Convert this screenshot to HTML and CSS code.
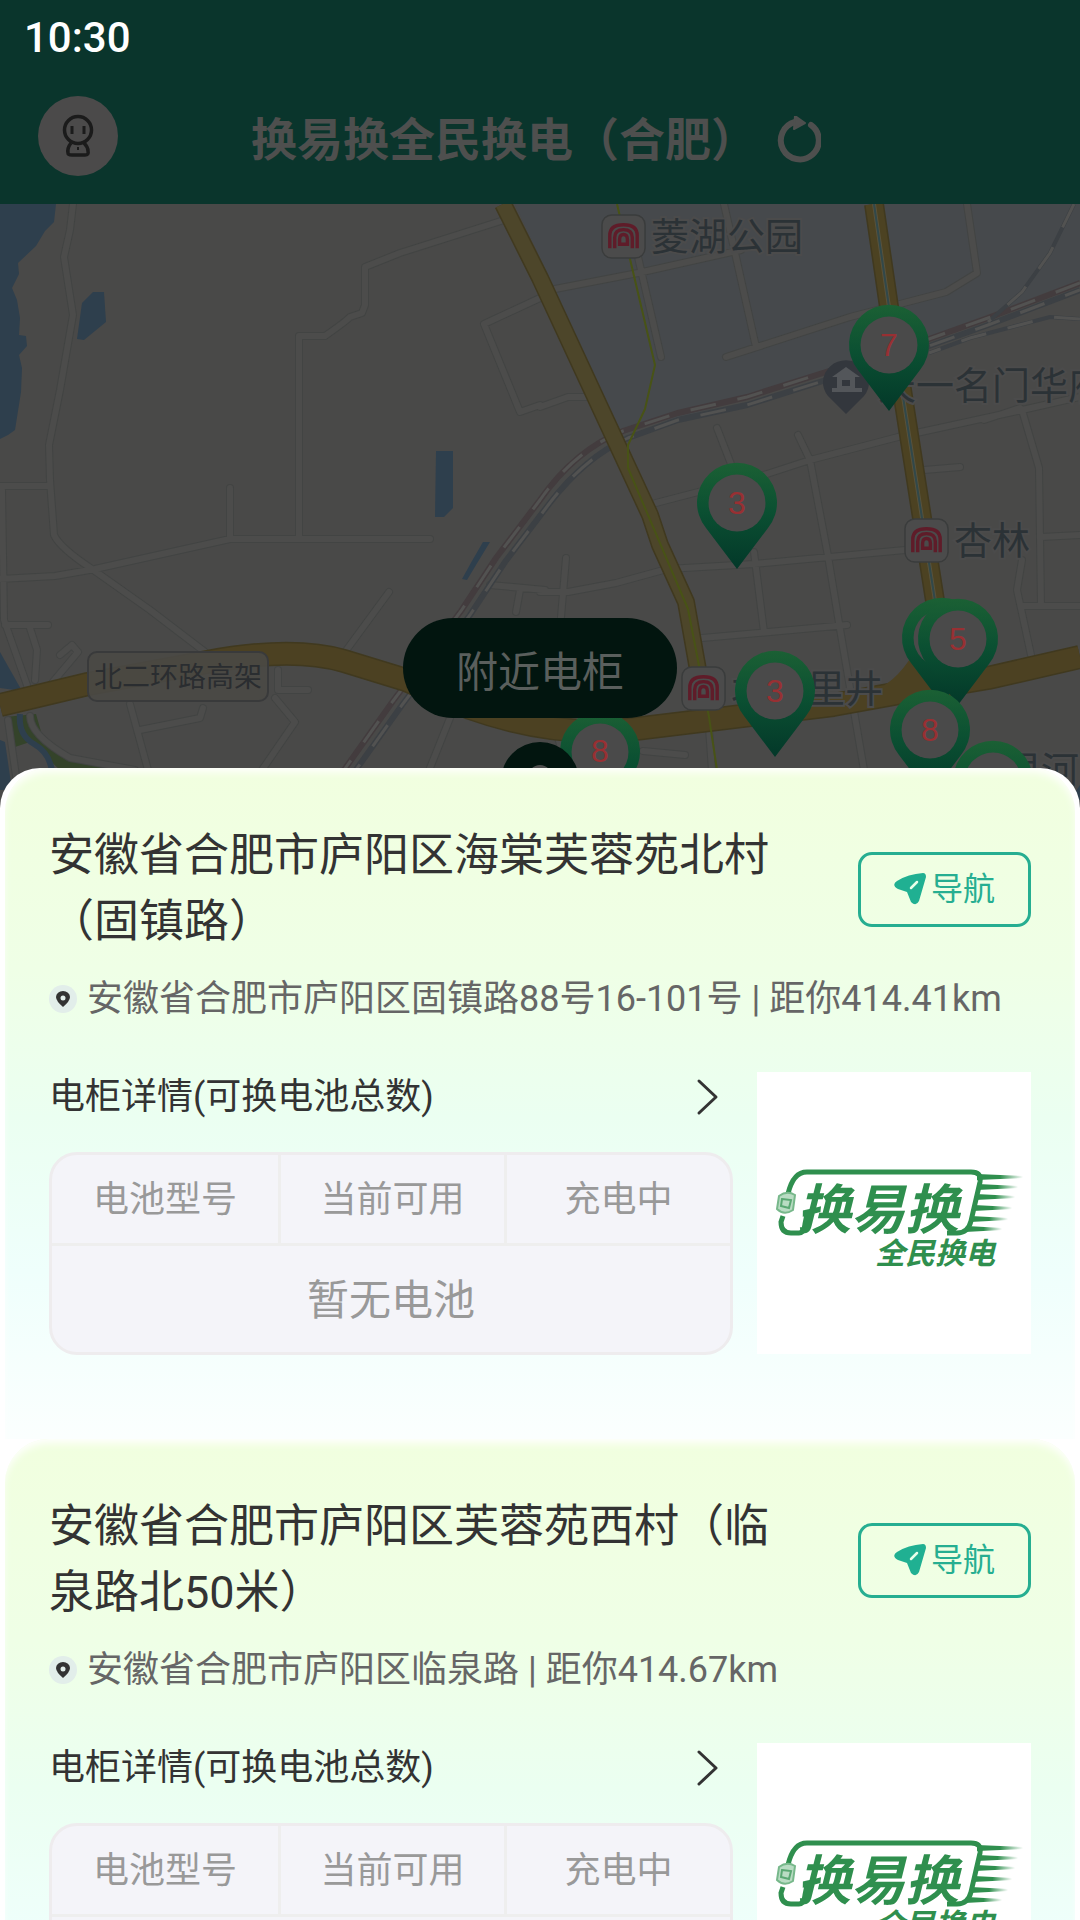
FILE: index.html
```html
<!DOCTYPE html>
<html lang="zh-CN">
<head>
<meta charset="utf-8">
<meta name="viewport" content="width=device-width, initial-scale=1">
<title>换易换全民换电（合肥）</title>
<link rel="stylesheet" href="styles.css">
</head>
<body>
<svg class="defs" aria-hidden="true">
  <defs>
    <linearGradient id="pin-fill" x1="0" y1="0" x2="0" y2="1">
      <stop offset="0" stop-color="#1b6034"/>
      <stop offset=".45" stop-color="#0b5032"/>
      <stop offset="1" stop-color="#033829"/>
    </linearGradient>
    <linearGradient id="speed" x1="0" x2="1">
      <stop offset="0" stop-color="#2f8f4e"/>
      <stop offset=".5" stop-color="#2f8f4e"/>
      <stop offset="1" stop-color="#2f8f4e" stop-opacity="0"/>
    </linearGradient>
    <symbol id="pin" viewBox="-40 -40 80 106" overflow="visible">
      <path d="M0 66 L-31 25 A40 40 0 1 1 31 25 Z" fill="url(#pin-fill)"/>
      <circle r="28.500" fill="#4a4a4a"/>
    </symbol>
    <symbol id="metro" viewBox="0 0 46 46">
      <rect x="1" y="1" width="44" height="44" rx="10" fill="#4b4b4b" stroke="#3a3c3c" stroke-width="1.500"/>
      <g fill="none" stroke="#5f1c29" stroke-width="3.500">
        <path d="M9 35V22Q9 11 23 11T37 22V35"/>
        <path d="M14 35V24Q14 16 23 16T32 24V35"/>
        <path d="M19 31V26Q19 21 23 21T27 26V31Z" fill="#4b4b4b"/>
      </g>
    </symbol>
    <symbol id="send" viewBox="0 0 32 32">
      <path d="M29 0Q32 0 32 4L25 28Q22 34 17 29L13 19L4 16Q-3 12 3 8Q14 1 29 0Z" fill="#20b092"/>
      <path d="M17 15L23 9" stroke="#e6ffe9" stroke-width="2.500" stroke-linecap="round"/>
    </symbol>
    <symbol id="place" viewBox="0 0 28 28">
      <circle cx="14" cy="14" r="14" fill="#e2eeea"/>
      <path d="M14 22Q7 16 7 12A7 6 0 0 1 21 12Q21 16 14 22Z" fill="#333"/>
      <circle cx="14" cy="13" r="2.500" fill="#e2eeea"/>
    </symbol>
    <symbol id="chevron" viewBox="0 0 24 38">
      <path d="M3 3L20 19L3 35" fill="none" stroke="#333" stroke-width="3" stroke-linecap="round" stroke-linejoin="round"/>
    </symbol>
    <symbol id="brand" viewBox="0 0 274 282">
      <g fill="none" stroke="#2f8f4e" stroke-width="5">
        <path d="M31 122Q36 100 50 100H214Q225 100 223 110L214 149Q211 161 200 161H190"/>
        <path d="M26 144L24 150Q24 161 34 161H42Q47 161 48 152L50 142"/>
      </g>
      <path d="M22 124Q30 118 38 123L36 138Q27 144 20 137Z" fill="#b9dcc3" stroke="#77b88b" stroke-width="2"/>
      <path d="M25 127L34 128L32 136L24 134Z" fill="none" stroke="#5aa873" stroke-width="2"/>
      <g fill="url(#speed)">
        <path d="M220 102L266 104V106L220 108Z"/>
        <path d="M221 112L261 114V116L220 118Z"/>
        <path d="M219 122L258 124V126L218 128Z"/>
        <path d="M217 133L255 135V137L216 139Z"/>
        <path d="M214 144L251 146V148L213 150Z"/>
        <path d="M210 154L245 156V158L208 160Z"/>
      </g>
      <text class="brand-name" x="40" y="157">换易换</text>
      <text class="brand-sub" x="118" y="192">全民换电</text>
    </symbol>
  </defs>
</svg>

<div class="app">
  <header class="topbar">
    <div class="status">10:30</div>
    <div class="nav">
      <button class="avatar" type="button" aria-label="我的">
        <svg viewBox="0 0 80 80" fill="none" stroke="#1b1b1b" stroke-width="3.500">
          <circle cx="40" cy="34" r="13.500"/>
          <path d="M34 30V38M46 30V38" stroke-width="3"/>
          <path d="M33 47Q29 52 30 57Q30 59 34 59H47Q51 59 50 55Q50 51 46 47"/>
          <path d="M40 51V54" stroke-width="2"/>
        </svg>
      </button>
      <div class="heading">
        <h1 class="title">换易换全民换电（合肥）</h1>
        <button class="refresh" type="button" aria-label="刷新">
          <svg viewBox="0 0 44 48">
            <path d="M34 9A19 19 0 1 1 18 6" fill="none" stroke="#4e4f4e" stroke-width="6" stroke-linecap="round"/>
            <path d="M18 0L28 7L17 13Z" fill="#4e4f4e" stroke="#4e4f4e" stroke-width="2" stroke-linejoin="round"/>
          </svg>
        </button>
      </div>
    </div>
  </header>

  <main class="map">
    <svg class="map-canvas" viewBox="0 204 1080 600" preserveAspectRatio="xMidYMin slice">
      <path d="M515 204L620 432L700 412L850 368L960 325L1080 280V204Z" fill="#46494c"/>
      <g fill="#2e3f4d">
        <path d="M0 204H56L54 222L45 231L36 246L18 263L19 274L12 288L17 300L20 318L19 335L26 336L27 346L19 355L22 368L21 392L15 430L8 435L0 439Z"/>
        <path d="M77 339L82 303L93 292L104 292L106 322L84 340Z"/>
        <path d="M436 451H453V508L444 517H435Z"/>
        <path d="M483 542H490L476 565L467 580L462 579L472 561Z"/>
        <path d="M0 652L22 691L0 688Z"/>
        <path d="M0 740L5 742L12 790H0Z"/>
        <path d="M1080 785L1070 800H1080Z"/>
      </g>
      <path d="M5 717L36 714L42 735L65 752L75 757L95 762L135 770H60L30 742L12 748Z" fill="#34432a"/>
      <path d="M20 714Q18 735 34 744T52 772" fill="none" stroke="#2e3f4d" stroke-width="6"/>

      <g fill="none" stroke-linejoin="round" stroke-linecap="round">
        <g stroke="#424443" stroke-width="8">
          <path id="streets" d="M73 204L70 230L64 257L73 315L60 390L49 445L50 480L54 535Q60 548 92 569L150 610L205 652M0 579L55 576L95 569L230 539H430M230 539V488M299 539V336H325Q345 322 350 317L362 313L365 305V267L400 253L504 220M0 486H49M2 490L4 620L28 688M389 592L345 652M540 298L484 324L520 412L540 405M5 625H48M30 628L37 650L35 680M52 683L78 652L72 645L60 655M490 585L545 590M520 590L516 612M130 704L148 770M140 730L200 718L203 708M275 698L295 722L262 770M278 670V690H308M450 718L430 768M8 720L18 790M30 716Q30 735 70 758L135 770M555 289L638 273L741 250M638 257L661 357M724 204L736 257L756 347M726 357L850 317L946 292L977 273L967 204M540 407L568 397H590M717 428L731 464M798 435L810 460L828 556L840 629L864 770M652 504L767 474L810 460L898 437L1022 410L1080 397M1022 410L1039 468L1041 606M1041 537L1080 535M1022 606H1080M924 470L960 467M540 592H568L616 583L667 569L754 564L905 550M566 558L561 617M754 552L764 632M702 638L847 625M1022 560L1017 590L1031 655M709 728L712 770M643 751L685 755M555 728L568 770M984 420L1020 408"/>
        </g>
        <use href="#streets" stroke="#4c4c4b" stroke-width="6"/>
      </g>

      <g fill="none">
        <path d="M1080 283L988 318L929 339L826 372L747 397L678 413L623 431Q575 450 540 500L496 558L461 611L393 701L344 770" stroke="#433c3e" stroke-width="6"/>
        <path d="M1080 290L988 325L929 346L826 380L747 405L678 420L628 438Q585 457 549 504L505 562L470 615L402 705L353 774" stroke="#3c4044" stroke-width="6"/>
        <path d="M1074 204L1050 253L1022 292L988 322M1080 319L1050 317L970 338L929 353" stroke="#3c4044" stroke-width="4"/>
        <g stroke="#525251" stroke-width="3" stroke-dasharray="26 22">
          <path d="M1080 283L988 318L929 339L826 372L747 397L678 413L623 431Q575 450 540 500L496 558L461 611L393 701L344 770"/>
          <path d="M1080 290L988 325L929 346L826 380L747 405L678 420L628 438Q585 457 549 504L505 562L470 615L402 705L353 774" stroke-dashoffset="10"/>
          <path d="M1074 204L1050 253L1022 292L988 322M1080 319L1050 317L970 338L929 353"/>
        </g>
      </g>

      <g fill="none" stroke-linejoin="round">
        <path d="M503 204L540 278L650 515L660 545L686 602L698 670" stroke="#40391f" stroke-width="18"/>
        <path d="M503 204L540 278L650 515L660 545L686 602L698 670" stroke="#4d462a" stroke-width="15"/>
        <path d="M0 705L88 684L207 662Q293 646 344 661L406 680L470 708Q560 740 643 728L833 705L905 692L988 678L1080 657" stroke="#40391f" stroke-width="24"/>
        <path d="M0 705L88 684L207 662Q293 646 344 661L406 680L470 708Q560 740 643 728L833 705L905 692L988 678L1080 657" stroke="#4c4122" stroke-width="21"/>
        <path d="M875 690Q900 680 918 645L960 690Z" fill="#4c4122"/>
        <path d="M874 204L889 307L922 518L938 620" stroke="#40391f" stroke-width="20"/>
        <path d="M874 204L889 307L922 518L938 620" stroke="#4c4222" stroke-width="17"/>
        <path d="M874 204L889 307L922 518L938 620" stroke="#58523c" stroke-width="4"/>
        <path d="M874 204L889 307L922 518L938 620" stroke="#31484a" stroke-width="2"/>
        <path d="M617 204L630 259L655 365L645 409L628 445V468L688 609L709 717L717 770" stroke="#485316" stroke-width="2"/>
      </g>

      <rect x="88" y="652" width="180" height="49" rx="9" fill="#4a4945" fill-opacity=".9" stroke="#393a3b" stroke-width="2"/>
      <text class="road-label" x="94" y="687">北二环路高架</text>

      <use href="#metro" x="601" y="214" width="45" height="45"/>
      <use href="#metro" x="904" y="518" width="45" height="45"/>
      <use href="#metro" x="681" y="666" width="45" height="45"/>
      <g class="place-label">
        <text x="651" y="250">菱湖公园</text>
        <text x="878" y="399">天一名门华府</text>
        <text x="954" y="554">杏林</text>
        <text x="731" y="702">北五里井</text>
        <text x="965" y="784">四里河</text>
      </g>
      <path d="M846 414L828 396A23 22 0 1 1 864 396Z" fill="#33373d"/>
      <path d="M832 377L846 367L860 377H855V388H862V392H832V388H837V377ZM842 380V386H850V380Z" fill="#53565a" fill-rule="evenodd"/>

      <g class="pin-count">
        <use href="#pin" x="849" y="305" width="80" height="106"/><text x="889" y="356">7</text>
        <use href="#pin" x="697" y="463" width="80" height="106"/><text x="737" y="514">3</text>
        <use href="#pin" x="902" y="598" width="80" height="106"/>
        <use href="#pin" x="918" y="599" width="80" height="106"/><text x="958" y="650">5</text>
        <use href="#pin" x="735" y="651" width="80" height="106"/><text x="775" y="702">3</text>
        <use href="#pin" x="890" y="690" width="80" height="106"/><text x="930" y="741">8</text>
        <use href="#pin" x="560" y="712" width="80" height="106"/><text x="600" y="762">8</text>
        <use href="#pin" x="953" y="741" width="80" height="106"/>
      </g>
      <circle cx="540" cy="781" r="39" fill="#02150f"/>
      <circle cx="540" cy="777" r="10" fill="none" stroke="#4e4f4e" stroke-width="4"/>
    </svg>
    <button class="nearby" type="button">附近电柜</button>
  </main>

  <section class="sheet" aria-label="附近电柜列表">
    <article class="card">
      <div class="card-head">
        <h2 class="card-title">安徽省合肥市庐阳区海棠芙蓉苑北村（固镇路）</h2>
        <button class="go" type="button"><svg><use href="#send"/></svg>导航</button>
      </div>
      <p class="address"><svg><use href="#place"/></svg>安徽省合肥市庐阳区固镇路88号16-101号 | 距你414.41km</p>
      <div class="card-body">
        <div class="detail">
          <button class="more" type="button">电柜详情(可换电池总数)<svg><use href="#chevron"/></svg></button>
          <table class="stock">
            <thead><tr><th>电池型号</th><th>当前可用</th><th>充电中</th></tr></thead>
            <tbody><tr><td colspan="3">暂无电池</td></tr></tbody>
          </table>
        </div>
        <svg class="photo" role="img" aria-label="换易换全民换电"><use href="#brand"/></svg>
      </div>
    </article>
    <article class="card">
      <div class="card-head">
        <h2 class="card-title">安徽省合肥市庐阳区芙蓉苑西村（临泉路北50米）</h2>
        <button class="go" type="button"><svg><use href="#send"/></svg>导航</button>
      </div>
      <p class="address"><svg><use href="#place"/></svg>安徽省合肥市庐阳区临泉路 | 距你414.67km</p>
      <div class="card-body">
        <div class="detail">
          <button class="more" type="button">电柜详情(可换电池总数)<svg><use href="#chevron"/></svg></button>
          <table class="stock">
            <thead><tr><th>电池型号</th><th>当前可用</th><th>充电中</th></tr></thead>
            <tbody><tr><td colspan="3">暂无电池</td></tr></tbody>
          </table>
        </div>
        <svg class="photo" role="img" aria-label="换易换全民换电"><use href="#brand"/></svg>
      </div>
    </article>
  </section>
</div>
</body>
</html>
```

FILE: styles.css
```css
* {
  box-sizing: border-box;
}

body,
h1,
h2,
p {
  margin: 0;
}

body {
  font-family: Roboto, "Noto Sans CJK SC", sans-serif;
  color: #333;
}

button {
  padding: 0;
  border: 0;
  background: none;
  color: inherit;
  font: inherit;
}

svg {
  display: block;
}

.defs {
  position: absolute;
  width: 0;
  height: 0;
}

.app {
  position: relative;
  display: flex;
  flex-direction: column;
  height: 100vh;
  overflow: hidden;
  background: #494948;
}

/* Header */
.topbar {
  background: #0a352c;
}

.status {
  padding: 12px 24px;
  color: #fff;
  font-size: 42px;
  font-weight: 500;
  line-height: 52px;
}

.nav {
  display: grid;
  grid-template-columns: 80px 1fr 88px;
  align-items: center;
  height: 128px;
  padding: 20px 38px;
}

.avatar {
  align-self: start;
  width: 80px;
  height: 80px;
  border-radius: 50%;
  background: #4b4a4a;
}

.heading {
  display: flex;
  align-items: center;
  justify-content: center;
  gap: 20px;
}

.title {
  color: #4e4f4e;
  font-size: 46px;
  font-weight: 700;
  line-height: 64px;
}

.refresh svg {
  width: 44px;
  height: 48px;
}

/* Map */
.map {
  position: relative;
  flex: 1;
  overflow: hidden;
}

.map-canvas {
  width: 100%;
  aspect-ratio: 1080 / 600;
}

.place-label {
  fill: #2b3236;
  stroke: #4b4b4b;
  stroke-width: 4px;
  paint-order: stroke;
  font-size: 38px;
}

.road-label {
  fill: #2a2d30;
  font-size: 28px;
}

.pin-count {
  fill: #983033;
  font-family: "Liberation Sans", Arial, sans-serif;
  font-size: 32px;
  text-anchor: middle;
}

.nearby {
  position: absolute;
  top: 414px;
  left: 50%;
  width: 274px;
  height: 100px;
  margin-left: -137px;
  border-radius: 50px;
  background: #02150f;
  color: #5a5f5d;
  font-size: 42px;
}

/* Cabinet list */
.sheet {
  position: absolute;
  top: 40%;
  right: 0;
  bottom: 0;
  left: 0;
  overflow: hidden;
  border-radius: 40px 40px 0 0;
  background: #fff;
}

.card {
  margin: 0 5px;
  padding: 55px 44px 84px;
  border-radius: 44px 44px 0 0;
  background: linear-gradient(#f1ffdf, #efffe6 30%, #ebfff1 52%, #effffc 75%, #fbfffe 100%);
  box-shadow: inset 0 6px 8px -2px #fff;
}

.card-head {
  display: flex;
  align-items: center;
  justify-content: space-between;
  gap: 60px;
}

.card-title {
  flex: 0 1 732px;
  font-size: 45px;
  font-weight: 400;
  line-height: 66px;
}

.go {
  display: flex;
  flex: none;
  align-items: center;
  justify-content: center;
  gap: 5px;
  width: 173px;
  height: 75px;
  border: 3px solid #26ae91;
  border-radius: 14px;
  color: #26ae91;
  font-size: 32px;
  line-height: 32px;
}

.go svg {
  width: 32px;
  height: 32px;
}

.address {
  display: flex;
  align-items: center;
  gap: 10px;
  margin-top: 20px;
  color: #666;
  font-size: 36px;
  line-height: 48px;
}

.address svg {
  width: 28px;
  height: 28px;
}

.card-body {
  display: flex;
  gap: 24px;
  margin-top: 49px;
}

.detail {
  flex: 1;
}

.more {
  display: flex;
  align-items: center;
  justify-content: space-between;
  width: 100%;
  padding-right: 13px;
  font-size: 36px;
  line-height: 50px;
}

.more svg {
  width: 24px;
  height: 38px;
}

.stock {
  width: 100%;
  margin-top: 30px;
  border: 3px solid #eeecee;
  border-radius: 28px;
  border-spacing: 0;
  background: #f4f4f9;
  color: #999;
  table-layout: fixed;
}

.stock th,
.stock td {
  padding: 0 0 6px;
  text-align: center;
}

.stock th {
  height: 91px;
  border-bottom: 3px solid #eee;
  font-size: 36px;
  font-weight: 400;
}

.stock th + th {
  border-left: 3px solid #eee;
}

.stock td {
  height: 106px;
  font-size: 42px;
}

.photo {
  flex: none;
  width: 274px;
  height: 282px;
  background: #fff;
}

.brand-name,
.brand-sub {
  fill: #2f8f4e;
  font-style: italic;
  font-weight: 700;
}

.brand-name {
  font-size: 54px;
}

.brand-sub {
  font-size: 30px;
}
```
